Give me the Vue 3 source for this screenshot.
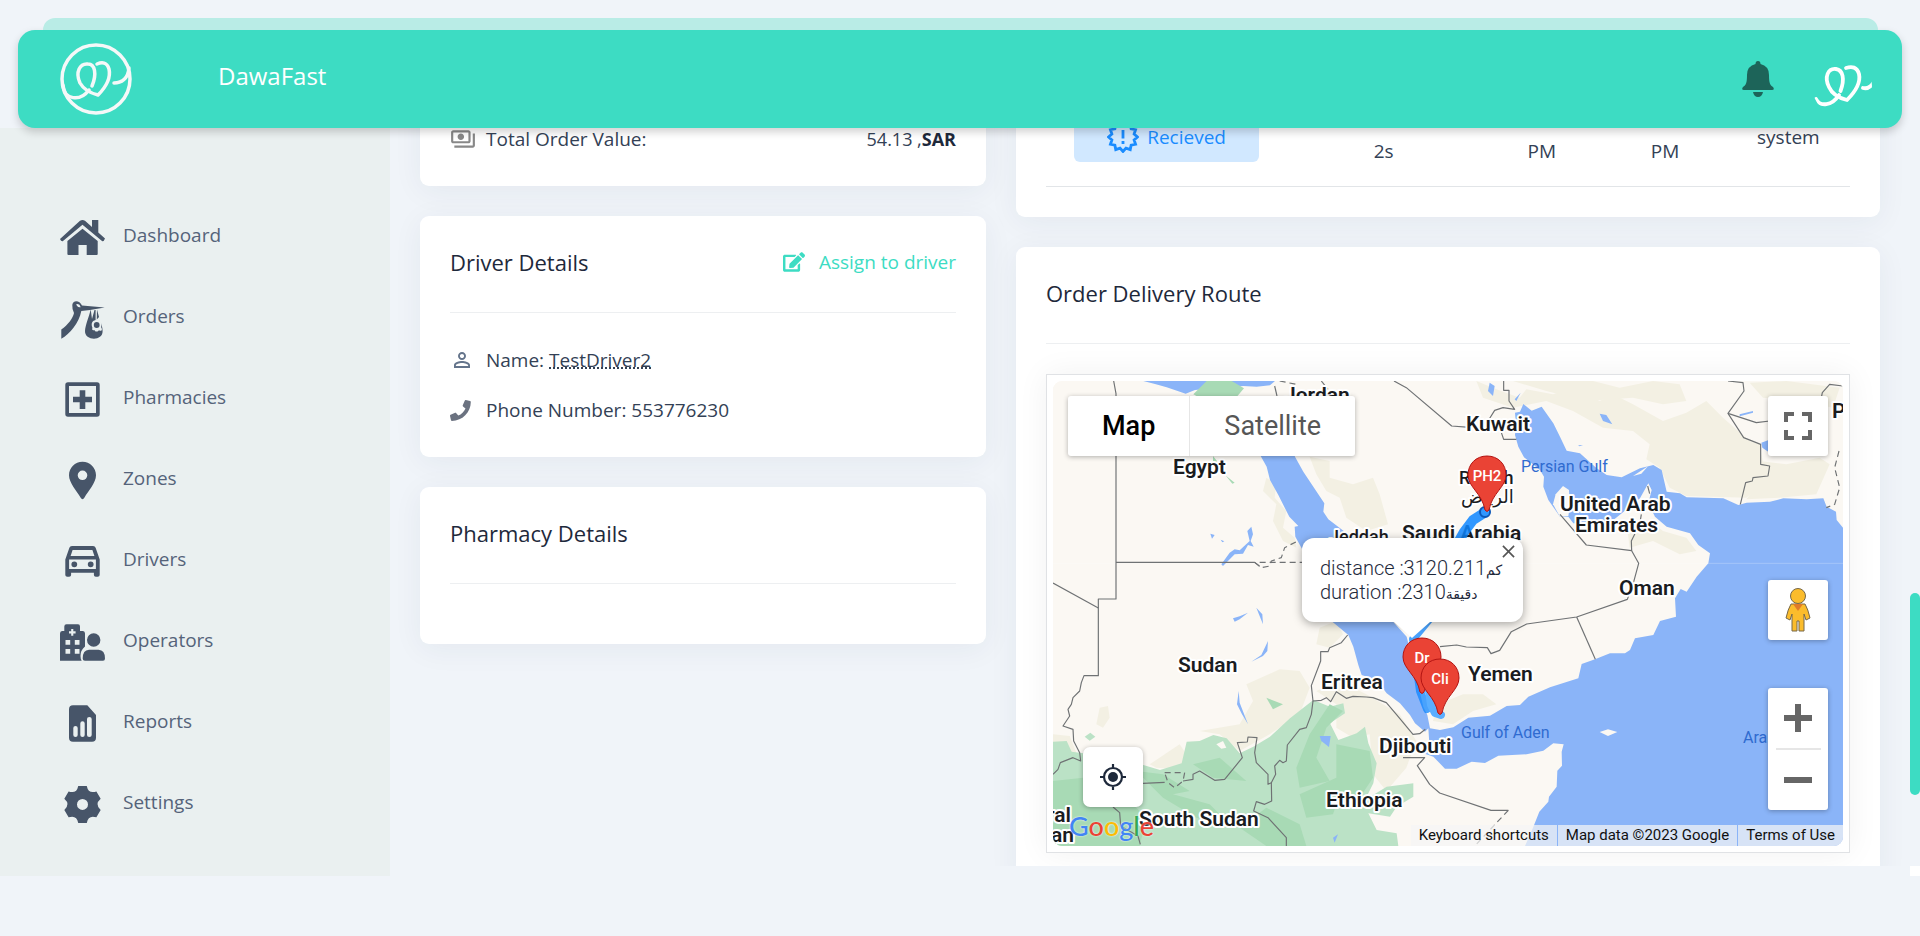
<script setup>
const polar = (cx, cy, r, deg) => {
  const a = (deg * Math.PI) / 180
  return `${(cx + r * Math.cos(a)).toFixed(2)} ${(cy + r * Math.sin(a)).toFixed(2)}`
}

const gear = [0, 1, 2, 3, 4, 5]
  .map((i) => {
    const a = -90 + i * 60
    return `${i ? 'L' : 'M'}${polar(22.5, 21.4, 19, a - 13)}L${polar(22.5, 21.4, 19, a + 13)}Q${polar(22.5, 21.4, 11.8, a + 30)} ${polar(22.5, 21.4, 19, a + 47)}`
  })
  .join('') + 'ZM17 21.4a5.5 5.5 0 1 0 11 0a5.5 5.5 0 1 0 -11 0Z'

const burst = Array.from({ length: 24 }, (_, i) => `${i ? 'L' : 'M'}${polar(16, 16, i % 2 ? 11.5 : 14.5, i * 15)}`).join('') + 'Z'

const menu = [
  { label: 'Dashboard', paths: ['M0 23 20 4.8Q22.5 3 25 4.8L32 11V4H38.3V16.6L45 22.6Q44 25.5 42.3 25.3L22.5 8.8 2.7 25.3Q1 25.6 0 23Z', 'M22.5 12.8 37.7 25V38Q37.7 39 36.7 39H26.7V29H18.5V39H8.5Q7.4 39 7.4 38V25Z'] },
  { label: 'Orders', paths: ['M12.3 8C12.5 3 19.500 2.500 22 8.500L44.700 10.500 30 13 21.300 14C19 26 10 37 1.300 41.800V32.500C8 28 13 21 14 16Q12 12 12.300 8ZM16 7.500Q18 11 20.700 10.200 19.500 6 16 7.500Z', 'M30.700 12.500C29 20 25.300 28 25 34 24.600 44 43 44.500 42.600 34 42.500 30 41.500 28 40.800 25 42 29 40.500 30 41.800 31.500 42.500 34 40 34.500 39 33 38 35 35 35 34.500 33 32.500 34 31.500 32 32.500 31 31 27 31.500 24 35.600 23V13H34.500L32 22ZM37 12.500 39 20 36.800 22.500Z', 'M33.800 28a2.900 2.900 0 1 0 5.800 0a2.900 2.900 0 1 0-5.800 0Z'] },
  { label: 'Pharmacies', paths: ['M8 4.300H37Q39.700 4.300 39.700 7V36Q39.700 38.700 37 38.700H8Q5.300 38.700 5.300 36V7Q5.300 4.300 8 4.300ZM9 8V35H36V8ZM19.700 12.200H25.300V18.700H32V24.300H25.300V31H19.700V24.300H13V18.700H19.700Z'] },
  { label: 'Zones', paths: ['M22.500 2.700C15 2.700 9 8.700 9 16.200 9 24 17 32 20.500 38.500Q22.500 42 24.500 38.500C28 32 36 24 36 16.200 36 8.700 30 2.700 22.500 2.700ZM17.700 16.300a4.800 4.800 0 1 1 9.600 0a4.800 4.800 0 1 1-9.600 0Z'] },
  { label: 'Drivers', paths: ['M35.700 8C35.300 6.800 34.300 6 33 6H12C10.700 6 9.700 6.800 9.300 8L5.300 19.500V34.700C5.300 35.800 6.200 36.700 7.300 36.700H9.200C10.300 36.700 11.100 35.800 11.100 34.700V32.800H33.900V34.700C33.900 35.800 34.700 36.700 35.800 36.700H37.700C38.800 36.700 39.700 35.800 39.700 34.700V19.500ZM12.600 9.900H32.400L34.400 15.900H10.600ZM35.900 29H9.100V19.500H35.900Z', 'M11.400 24.300a2.900 2.900 0 1 0 5.800 0a2.900 2.900 0 1 0-5.800 0ZM27.800 24.300a2.900 2.900 0 1 0 5.800 0a2.900 2.900 0 1 0-5.800 0Z'] },
  { label: 'Operators', paths: ['M4.300 10V5.500Q4.300 3.300 6.500 3.300H18Q20 3.300 20 5.500V10H23Q25 10 25 12.500V25.500Q20.500 29 20.500 35 20.500 38 21.700 39.700H0V12.500Q0 10 2 10ZM11.200 8V10.300H9V12.400H11.200V14.800H13.300V12.400H15.600V10.300H13.300V8ZM5.500 19V23.700H10.200V19ZM14.800 19V23.700H19.500V19ZM5.500 28V32.700H10.200V28ZM14.800 28V32.700H19.500V28Z', 'M27 19a6.700 6.700 0 1 0 13.400 0a6.700 6.700 0 1 0-13.400 0ZM29 28.700H38.500Q45 29 45 37.500 45 39.700 43 39.700H25Q22.700 39.700 22.700 37.500 22.700 29 29 28.700Z'] },
  { label: 'Reports', paths: ['M13 3.300H27.300L36 13V35.700Q36 39.700 32 39.700H13Q9 39.700 9 35.700V7.300Q9 3.300 13 3.300ZM13.300 26V33Q13.300 35 15.500 35 17.700 35 17.700 33V26Q17.700 24 15.500 24 13.300 24 13.300 26ZM20.300 21.500V33Q20.300 35 22.500 35 24.700 35 24.700 33V21.500Q24.700 19.300 22.500 19.300 20.300 19.300 20.300 21.500ZM27 17V33Q27 35 29.300 35 31.700 35 31.700 33V17Q31.700 15 29.300 15 27 15 27 17Z'] },
  { label: 'Settings', paths: [gear] },
]

const countries = [
  ['Jordan', 231, 21], ['Egypt', 120, 93], ['Kuwait', 413, 50], ['Saudi Arabia', 349, 159],
  ['United Arab', 507, 130], ['Emirates', 522, 151], ['Oman', 566, 214], ['Sudan', 125, 291],
  ['Eritrea', 268, 308], ['Yemen', 415, 300], ['Djibouti', 326, 372], ['Ethiopia', 273, 426],
  ['South Sudan', 86, 445], ['ral', -6, 441], ['an', -2, 461], ['P', 779, 37],
]
const seas = [['Persian Gulf', 468, 91], ['Gulf of Aden', 408, 357], ['Arabian Sea', 690, 362]]

const beige = [
  '1270,0 1330,25 1400,50 1420,25 1500,40 1560,20 1640,60 1680,40 1740,70 1830,120 1900,95 1960,60 2010,110 2090,180 2120,190 2140,300 2080,350 1900,345 1850,320 1820,260 1780,235 1790,190 1740,150 1650,140 1560,90 1480,60 1380,80 1290,50',
  '1380,0 1500,0 1620,0 1700,20 1800,0 1880,10 1900,60 1830,70 1740,50 1600,60 1480,30',
  '2090,5 2200,0 2360,20 2340,80 2240,60 2130,50',
  '2120,240 2200,250 2300,230 2330,250 2290,340 2180,350 2080,355 2130,290',
  '770,227 830,240 830,290 900,310 960,290 980,340 1005,430 940,450 880,410 860,350 820,330 790,280',
  '640,290 670,310 665,350 700,390 690,440 725,470 730,500 690,480 660,420 670,370 630,330',
  '580,910 680,865 740,870 770,920 740,1000 650,1060 560,1110 500,1060 440,1050 560,1030 600,960',
  '290,1150 380,1090 400,1120 380,1165 310,1160',
  '790,930 860,900 940,940 1040,1000 1090,1080 1060,1160 1000,1230 960,1180 950,1060 900,1070 850,1040 850,970',
  '0,1060 50,1065 70,1115 100,1140 60,1130 0,1090',
  '1720,420 1790,420 1830,450 1900,470 1930,510 1880,520 1800,480 1730,500',
  '1180,960 1230,940 1290,940 1330,970 1260,990 1200,1030 1140,1020 1150,980',
  '140,980 165,975 170,1010 150,1040 130,1030',
  '800,740 850,720 870,760 830,800 790,790',
]
const forest = [
  '830,970 870,990 820,1040 790,1130 830,1200 740,1220 730,1160 770,1060',
  '850,1090 950,1110 960,1190 920,1250 860,1240 840,1300 760,1310 740,1240 850,1190',
  '0,1200 90,1190 130,1260 210,1240 280,1310 260,1395 0,1395',
  '250,1170 330,1180 410,1230 360,1240 470,1270 530,1330 430,1310 330,1250',
  '640,1280 740,1330 760,1395 640,1395 560,1340',
  '420,1150 500,1130 580,1200 480,1190', '640,950 690,970 660,985',
]
const borders = [
  '182,0 189,38 189,654 136,654 136,884 93,884 85,905 80,930 60,950 55,970 45,985 50,1005 30,1035 60,1045 62,1080 80,1115 83,1140 60,1130 22,1145 15,1165 0,1180',
  '0,606 136,681', '189,544 605,544 620,556',
  '1023,0 1060,20 1196,135 1250,139', '1352,0 1352,28 1368,28 1368,60 1385,85 1350,80 1325,88 1305,120',
  '1340,140 1352,175 1390,175', '665,15 672,45', '805,0 825,25',
  '2025,0 2070,5 2073,30 2025,97 2110,125 2150,120', '2025,97 2072,170 2123,190 2123,250 2150,255 2145,285 2100,290 2098,300 2078,305 2062,370',
  '2305,50 2308,35 2330,10 2370,15', '1521,400 1600,492 1736,509 1757,547 1740,610 1723,655 1571,708 1421,729 1375,752 1340,808 1314,818 1303,800 1240,798 1211,792 1161,797',
  '1736,509 1735,480 1760,430 1765,400', '1571,708 1627,835', '1784,315 1790,338',
  '884,762 865,785 830,800 825,812 803,812 803,840 775,914 780,960 805,958 820,950 833,962 850,932 880,952 900,946 940,948 960,950 1000,965 1030,1000 1080,1060 1100,1058 1117,1045',
  '780,960 775,1000 760,1040 740,1045 703,1092 700,1140 690,1145 680,1138 665,1155 668,1180 655,1205 645,1210 645,1180 610,1145 605,1115 612,1070 585,1068 583,1083 553,1085 568,1130 515,1195 485,1198 440,1170 420,1180 420,1195 390,1200',
  '655,1205 656,1260 635,1270 610,1262 602,1290 645,1310 700,1370 700,1395',
  '180,1278 200,1295 203,1335 255,1365 262,1390', '270,1207 335,1204',
  '1050,1130 1115,1130 1093,1154 1130,1210 1160,1236 1314,1288 1366,1288',
]
const dashed = ['620,544 750,544', '605,544 625,560 650,555 655,540 685,530 695,500 730,482', '335,1175 395,1175 390,1200 365,1220 345,1205 335,1175', '1366,1288 1265,1395', '2358,210 2345,260 2360,320 2345,370 2320,380', '680,0 730,10']
const qatar = '1521,407 1500,370 1508,340 1530,315 1548,327 1550,380 1546,405'
const pins = [['PH2', 434, 94], ['Dr', 369, 276], ['Cli', 387, 297]]
</script>

<template>
  <div class="app">
    <header class="topbar">
      <svg class="logo" viewBox="0 0 72 72" aria-label="DawaFast logo">
        <g fill="none" stroke="#f5f8f8" stroke-width="3.500" stroke-linecap="round" stroke-linejoin="round">
          <circle cx="36" cy="36" r="34" />
          <path d="M32 43C37 31 35 21 28 21 20 20 15 29 20 40 24 47 30 50 38 52 46 44 51 35 49 26 47 19 42 19 37 21" />
          <path d="M3 42C4 57 20 59 29 47M69 25C68 36 61 40 54 40" />
        </g>
      </svg>
      <h1>DawaFast</h1>
      <button class="bell" aria-label="Notifications">
        <svg viewBox="0 0 32 36"><path fill="#1d6459" d="M16 0Q18.500 0 18.500 3 27 5 27 14C27 22 28 24 31 26Q33 29 30 29H2Q-1 29 1 26C4 24 5 22 5 14Q5 5 13.500 3 13.500 0 16 0ZM11 31H21Q20 36 16 36 12 36 11 31Z" /></svg>
      </button>
      <button class="avatar" aria-label="Account">
        <svg viewBox="0 0 60 60">
          <g fill="none" stroke="#fff" stroke-width="3.800" stroke-linecap="round" stroke-linejoin="round">
            <path d="M28.500 35C33 23 31 14 24 13 16 12 12 21 17 31 20 38 27 42 35 44 43 36 49 27 47 18 45 11 40 10 34 12" />
            <path d="M4 43C8 51 20 50 27 39M51 32C55 33 59 31 62 26" />
          </g>
        </svg>
      </button>
    </header>

    <div class="body">
      <nav class="sidebar">
        <a v-for="m in menu" :key="m.label" href="#">
          <svg viewBox="0 0 45 45"><path v-for="p in m.paths" :key="p" :d="p" fill-rule="evenodd" /></svg>
          <span>{{ m.label }}</span>
        </a>
      </nav>

      <main>
        <div class="col">
          <section class="card total">
            <div class="row">
              <svg class="ic grey" viewBox="0 0 24 24"><path d="M19 14V6c0-1.100-.9-2-2-2H3c-1.100 0-2 .9-2 2v8c0 1.100.9 2 2 2h14c1.100 0 2-.9 2-2zm-2 0H3V6h14v8zm-7-7c-1.660 0-3 1.340-3 3s1.340 3 3 3 3-1.340 3-3-1.340-3-3-3zm13 0v11c0 1.100-.9 2-2 2H4v-2h17V7h2z" /></svg>
              <span>Total Order Value:</span>
              <span class="amount">54.13 ,<b>SAR</b></span>
            </div>
          </section>

          <section class="card">
            <div class="head">
              <h2>Driver Details</h2>
              <a href="#" class="assign">
                <svg viewBox="0 0 576 512"><path d="M402.600 83.200l90.200 90.200c3.800 3.800 3.800 10 0 13.800L274.400 405.600l-92.800 10.300c-12.400 1.400-22.900-9.100-21.500-21.500l10.300-92.800L388.800 83.200c3.800-3.800 10-3.800 13.800 0zm162-22.900l-48.800-48.800c-15.200-15.200-39.900-15.200-55.200 0l-35.400 35.400c-3.800 3.800-3.800 10 0 13.800l90.200 90.200c3.800 3.800 10 3.800 13.800 0l35.400-35.400c15.200-15.300 15.200-40 0-55.200zM384 346.200V448H64V128h229.800c3.200 0 6.200-1.300 8.500-3.500l40-40c7.600-7.600 2.200-20.500-8.500-20.500H48C21.500 64 0 85.500 0 112v352c0 26.500 21.500 48 48 48h352c26.500 0 48-21.500 48-48V306.200c0-10.700-12.900-16-20.500-8.500l-40 40c-2.200 2.300-3.500 5.300-3.500 8.500z" /></svg>
                Assign to driver
              </a>
            </div>
            <div class="rows">
              <div class="row">
                <svg class="ic blue" viewBox="0 -1 26 26"><path d="M12 5.900c1.160 0 2.100.94 2.100 2.100s-.94 2.100-2.100 2.100S9.900 9.160 9.900 8s.94-2.100 2.100-2.100m0 9c2.970 0 6.100 1.460 6.100 2.100v1.100H5.900V17c0-.64 3.130-2.100 6.100-2.100M12 4C9.790 4 8 5.790 8 8s1.790 4 4 4 4-1.790 4-4-1.790-4-4-4zm0 9c-2.670 0-8 1.340-8 4v3h16v-3c0-2.660-5.330-4-8-4z" /></svg>
                <span>Name: <abbr title="TestDriver2">TestDriver2</abbr></span>
              </div>
              <div class="row">
                <svg class="ic phone" viewBox="0 0 640 512"><path d="M493.400 24.600l-104-24c-11.300-2.600-22.900 3.300-27.500 13.900l-48 112c-4.200 9.800-1.400 21.300 6.900 28l60.600 49.600c-36 76.700-98.900 140.500-177.200 177.200l-49.600-60.600c-6.800-8.300-18.200-11.100-28-6.900l-112 48C3.900 366.500-2 378.100.6 389.400l24 104C27.100 504.200 36.700 512 48 512c256.100 0 464-207.500 464-464 0-11.200-7.700-20.900-18.600-23.400z" /></svg>
                <span>Phone Number: 553776230</span>
              </div>
            </div>
          </section>

          <section class="card">
            <div class="head"><h2>Pharmacy Details</h2></div>
            <div class="rows"></div>
          </section>
        </div>

        <div class="col wide">
          <section class="card status">
            <table>
              <tbody>
                <tr>
                  <td class="state">
                    <span class="pill">
                      <svg viewBox="0 0 32 32"><path :d="burst" fill="none" stroke="#1a8cff" stroke-width="2.800" /><path d="M14.600 9H17.400V17.500H14.600ZM14.600 20H17.400V23H14.600Z" fill="#1a8cff" /></svg>
                      Recieved
                    </span>
                  </td>
                  <td class="lower time">2s</td>
                  <td class="lower">PM</td>
                  <td class="lower">PM</td>
                  <td>system</td>
                </tr>
              </tbody>
            </table>
          </section>

          <section class="card">
            <div class="head"><h2>Order Delivery Route</h2></div>
            <div class="rows">
              <div class="frame">
                <div class="map">
                  <svg class="canvas" viewBox="0 0 790 465" preserveAspectRatio="xMidYMid slice">
                    <g transform="scale(.33333)">
                      <rect width="2370" height="1395" fill="#fbf8f3" />
                      <polygon v-for="p in beige" :key="p" :points="p" fill="#f3f0e3" />
                      <polygon fill="#bbe2c6" points="0,1082 41,1080 56,1112 91,1117 110,1150 271,1152 321,1167 386,1147 401,1082 440,1080 481,1062 521,1072 560,1117 601,1097 651,1067 711,1012 781,957 831,977 871,967 876,997 831,1027 856,1077 911,1057 936,1037 946,1087 971,1147 961,1207 936,1257 1001,1217 1081,1207 1081,1247 1031,1277 1011,1307 946,1297 971,1347 1031,1357 1036,1395 0,1395" />
                      <polygon points="490,1090 510,1080 520,1100 505,1103" fill="#fbf8f3" />
                      <polygon v-for="p in forest" :key="p" :points="p" fill="#a8dab5" />
                      <polygon points="95,1067 112,1055 127,1067 110,1079" fill="#bbe2c6" />
                      <g fill="#8ab4f8">
                        <polygon points="271,0 306,9 341,19 398,38 426,27 571,15 611,17 651,13 666,0" />
                        <path d="M560 60 623 225 641 257 651 297 676 342 696 382 709 407 736 435 725 437 727 467 746 502 839 723 886 762 901 797 916 852 926 882 971 897 1001 937 1041 967 1071 1002 1086 1027 1116 1052 1126 1042 1129 1087 1111 1117 1141 1127 1176 1163 1211 1163 1256 1142 1296 1146 1336 1124 1421 1120 1471 1109 1501 1087 1532 1090 1526 1112 1527 1154 1513 1169 1511 1217 1488 1247 1486 1262 1459 1292 1440 1340 1416 1395H2370V440L2351 417 2349 392 2321 377 2311 352 2261 355 2191 352 2151 362 2081 365 2056 372 2011 352 1901 349 1881 337 1841 332 1826 267 1801 252 1761 262 1706 289 1661 282 1631 262 1581 217 1541 209 1521 167 1501 127 1466 77 1436 89 1411 69 1401 92 1386 95 1389 132 1386 162 1396 197 1413 229 1461 267 1473 287 1471 317 1486 357 1521 407 1546 407 1561 427 1631 432 1681 417 1731 377 1761 352 1786 307 1796 327 1786 367 1806 407 1841 437 1911 457 1936 492 1971 517 1966 547 1931 587 1901 632 1883 624 1866 652 1869 707 1821 720 1801 762 1746 772 1731 807 1716 817 1671 817 1626 835 1586 849 1576 892 1491 919 1426 947 1401 972 1361 975 1311 1004 1246 1010 1201 1039 1161 1047 1131 1042 1123 1002 1111 977 1071 807 1061 767 1021 723 881 457 826 415 811 392 814 367 781 317 751 272 726 227 700 140Z" />
                        <path d="M505 550 530 515 545 505 560 508 590 480 583 450 595 437 600 460 593 480 602 497 585 492 570 518 545 520 510 555ZM472 458 485 462 477 473ZM503 476 514 481 508 484ZM540 712 560 706 585 695 560 715 545 722ZM610 680 628 700 630 730 622 710ZM645 780 643 810 630 825 595 842 625 822ZM557 930 560 965 585 1030 567 1000 552 970ZM800 1065 833 1065 828 1098 805 1080ZM840 1370 855 1360 845 1385Z" />
                        <path d="M1640 98 1660 102 1678 130 1650 120ZM1575 193 1590 192 1580 196ZM1310 5 1325 15 1320 45 1305 30ZM1385 55 1403 35 1390 60ZM2060 100 2100 90 2100 95 2060 106ZM2125 185 2145 178 2150 215 2128 200Z" />
                      </g>
                      <g fill="#fbf8f3">
                        <polygon :points="qatar" />
                        <path d="M1640 1053 1665 1045 1693 1053 1665 1065ZM1740 285 1785 256 1765 278Z" />
                      </g>
                      <path d="M421 40 436 48 551 48 573 22 536 0H461ZM480 225 492 240 495 265 545 305 538 308 515 280 480 240Z" fill="#a8dab5" />
                      <path d="M0 547H189M750 547H2370" stroke="#fff" stroke-opacity=".35" stroke-width="2" />
                      <g fill="none" stroke="#6f7274" stroke-width="3.500" stroke-linejoin="round">
                        <polyline v-for="p in borders" :key="p" :points="p" />
                        <polyline v-for="p in dashed" :key="p" :points="p" stroke-dasharray="18 12" />
                      </g>
                    </g>
                    <g class="country"><text v-for="c in countries" :key="c[0]" :x="c[1]" :y="c[2]">{{ c[0] }}</text></g>
                    <g class="city">
                      <text x="276" y="162">Jeddah</text><text x="406" y="103">Riyadh</text><text x="408" y="122">الرياض</text>
                    </g>
                    <g class="sea"><text v-for="s in seas" :key="s[0]" :x="s[1]" :y="s[2]">{{ s[0] }}</text></g>
                    <g fill="none" stroke="#0d86ff" stroke-linecap="round" stroke-linejoin="round">
                      <path d="M431 132 420 139 411 151 395 180" stroke-opacity=".85" stroke-width="10" />
                      <path d="M379 235 360 258 367 310 374 328" stroke-opacity=".75" stroke-width="8" />
                      <path d="M376 310 378 324 382 332 388 334" stroke="#5aaeff" stroke-width="8" />
                      <circle cx="432" cy="131" r="5" stroke="#0b57b8" stroke-width="2" />
                    </g>
                    <g v-for="p in pins" :key="p[0]">
                      <path :transform="`translate(${p[1]} ${p[2]})`" d="M0-19C-11-19-19-11-19 0-19 12-5 18-2 35Q0 38 2 35C5 18 19 12 19 0 19-11 11-19 0-19Z" fill="#ea4335" stroke="#b31412" />
                      <text class="pin" :x="p[1]" :y="p[2] + 6">{{ p[0] }}</text>
                    </g>
                  </svg>

                  <div class="types">
                    <button class="on">Map</button><button>Satellite</button>
                  </div>
                  <button class="ctl full" aria-label="Fullscreen"><svg viewBox="0 0 28 28"><path d="M2 10V2H10M18 2H26V10M26 18V26H18M10 26H2V18" fill="none" stroke="#666" stroke-width="4" /></svg></button>
                  <button class="ctl peg" aria-label="Street View">
                    <svg viewBox="0 0 28 46"><g fill="#fbbc2c" stroke="#76684a" stroke-width="1"><path d="M7 17H21Q24 22 26 31L22 33 20 27V44H15V34H13V44H8V27L6 33 2 31Q4 22 7 17Z" /><circle cx="14" cy="9" r="7.500" /></g><path d="M9 17H19L14 24Z" fill="#e07b29" /></svg>
                  </button>
                  <div class="zoom">
                    <button aria-label="Zoom in"><svg viewBox="0 0 28 28"><path d="M0 14H28M14 0V28" stroke="#666" stroke-width="6" /></svg></button>
                    <button aria-label="Zoom out"><svg viewBox="0 0 28 28"><path d="M0 14H28" stroke="#666" stroke-width="6" /></svg></button>
                  </div>
                  <button class="ctl locate" aria-label="My location"><svg viewBox="0 0 26 26"><circle cx="13" cy="13" r="5" fill="#1e293b" /><path d="M13 0V5M13 21V26M0 13H5M21 13H26M4 13a9 9 0 1 0 18 0a9 9 0 1 0-18 0Z" fill="none" stroke="#1e293b" stroke-width="2.200" /></svg></button>

                  <div class="popup">
                    <p>distance :3120.211<span>كم</span></p>
                    <p>duration :2310<span>دقيقة</span></p>
                    <button aria-label="Close"><svg viewBox="0 0 14 14"><path d="M1 1 13 13M13 1 1 13" stroke="#555" stroke-width="1.800" /></svg></button>
                  </div>
                  <div class="google" aria-label="Google"><i class="b">G</i><i class="r">o</i><i class="y">o</i><i class="b">g</i><i class="g">l</i><i class="r">e</i></div>
                  <div class="legal"><button>Keyboard shortcuts</button><span>Map data ©2023 Google</span><a href="#">Terms of Use</a></div>
                </div>
              </div>
            </div>
          </section>
        </div>
      </main>
    </div>
    <div class="track"><div class="thumb"></div></div>
  </div>
</template>

<style>
body { margin: 0; background: #f0f4f9; }
</style>

<style scoped>
.app { position: relative; min-height: 100vh; overflow: hidden; box-sizing: border-box; padding-top: 30px; background: #f0f4f9; color: #334155; font: 400 19px/28px "Open Sans", "Noto Sans", sans-serif; }
.app *, .app *::before, .app *::after { box-sizing: border-box; }
h1, h2, p { margin: 0; font-weight: 400; }
button { border: 0; padding: 0; background: none; font: inherit; color: inherit; cursor: pointer; }
a { color: inherit; text-decoration: none; }
svg { display: block; }

.topbar { position: relative; z-index: 2; display: flex; align-items: center; height: 98px; margin: 0 18px; padding: 0 30px 0 42px; border-radius: 17px; background: #3ddcc3; box-shadow: 0 4px 8px rgba(0, 0, 0, .18); }
.topbar::before { content: ""; position: absolute; z-index: -1; top: -12px; left: 25px; right: 24px; height: 12px; border-radius: 17px 17px 0 0; background: #b9ece6; }
.logo { width: 72px; height: 72px; }
.topbar h1 { margin-left: 86px; padding-bottom: 6px; color: #fff; font-size: 24px; font-weight: 500; }
.bell { width: 32px; margin-left: auto; }
.avatar { width: 60px; height: 60px; margin: 13px 0 0 38px; border-radius: 50%; overflow: hidden; }

.body { display: grid; grid-template-columns: 390px minmax(0, 1fr); align-items: start; }
.sidebar { height: calc(100vh - 188px); padding: 70px 60px 0; background: #eaf0f0; }
.sidebar a { display: flex; align-items: center; gap: 18px; height: 81px; color: #55637a; }
.sidebar svg { width: 45px; height: 45px; fill: #475569; }
.sidebar span { padding-bottom: 8px; }

main { display: flex; height: calc(100vh - 158px); margin-top: -40px; padding: 0 25px 0 15px; overflow: hidden; }
.col { flex: 0 0 40%; min-width: 0; padding: 0 15px; }
.wide { flex-basis: 60%; }
.card { margin-bottom: 30px; padding: 30px; border-radius: 9px; background: #fff; box-shadow: 0 5px 30px rgba(30, 50, 80, .06); }
.total { padding-top: 34px; border-radius: 0 0 9px 9px; }
.row { display: flex; align-items: center; gap: 10px; height: 34px; }
.ic { width: 26px; height: 26px; }
.grey { fill: #888; }
.blue { fill: #64748b; }
.phone { height: 21px; fill: #6b7280; }
.amount { margin-left: auto; font-size: 18px; }
.amount b { color: #1e293b; font-weight: 700; }
abbr { text-decoration: underline dotted; }
.head { display: flex; justify-content: space-between; align-items: flex-start; height: 67px; border-bottom: 1px solid #edeff1; line-height: 32px; }
.head h2 { color: #1e293b; font-size: 22px; }
.assign { display: flex; align-items: center; gap: 14px; color: #3ddcc3; }
.assign svg { width: 22px; height: 20px; fill: currentColor; }
.rows { display: grid; gap: 16px; padding-top: 30px; }

.status { padding-top: 0; }
table { width: 100%; table-layout: fixed; border-collapse: collapse; }
td { height: 98px; padding: 0; border-bottom: 1px solid #e2e5e8; text-align: center; }
.state { width: 30%; padding: 0 28px; }
.time { width: 24%; }
.lower { padding-top: 28px; }
.pill { display: flex; align-items: center; justify-content: center; gap: 8px; height: 50px; border-radius: 6px; background: #d1e8ff; color: #1a8cff; }
.pill svg { width: 32px; height: 32px; }

.frame { padding: 6px; border: 1px solid #e0e2e5; background: #fff; box-shadow: 0 0 30px rgba(0, 0, 0, .06); }
.map { position: relative; height: 465px; overflow: hidden; border-radius: 9px; background: #fbf8f3; font-family: Roboto, "DejaVu Sans", sans-serif; }
.canvas { width: 100%; height: 100%; }
.country text, .city text { fill: #1a1c1f; stroke: #fff; stroke-width: 4px; stroke-linejoin: round; paint-order: stroke; font-size: 21px; font-weight: 600; }
.city text { font-size: 18px; font-weight: 500; }
.sea text { fill: #2f6bd0; font-size: 16px; font-weight: 400; }
.pin { fill: #fff; font-size: 15px; font-weight: 500; text-anchor: middle; }
.types { position: absolute; top: 15px; left: 15px; display: flex; height: 60px; border-radius: 3px; background: #fff; box-shadow: 0 1px 5px rgba(0, 0, 0, .3); color: #565656; font-size: 27px; font-weight: 400; }
.types button { padding: 0 34px; }
.types .on { border-right: 1px solid #e6e6e6; color: #000; font-weight: 500; }
.ctl, .zoom { position: absolute; right: 15px; display: flex; align-items: center; justify-content: center; width: 60px; height: 60px; border-radius: 3px; background: #fff; box-shadow: 0 1px 5px rgba(0, 0, 0, .3); }
.full { top: 15px; }
.ctl svg, .zoom svg { width: 28px; }
.peg { bottom: 206px; }
.locate { right: auto; left: 30px; bottom: 39px; border-radius: 7px; }
.locate svg { width: 26px; }
.zoom { bottom: 36px; flex-direction: column; height: 122px; }
.zoom button { display: flex; align-items: center; justify-content: center; width: 45px; flex: 1; }
.zoom button + button { border-top: 2px solid #e6e6e6; }
.popup { position: absolute; top: 157px; left: 249px; width: 221px; padding: 18px; border-radius: 12px; background: #fff; box-shadow: 0 2px 10px rgba(0, 0, 0, .35); font-size: 20px; line-height: 24px; white-space: nowrap; color: #1e293b; }
.popup p { height: 24px; font-weight: 300; }
.popup span { font-size: 14px; font-weight: 400; }
.popup::after { content: ""; position: absolute; top: 100%; left: 92px; border: 18px solid transparent; border-top: 16px solid #fff; border-bottom: 0; }
.popup button { position: absolute; top: 7px; right: 8px; }
.popup svg { width: 13px; }
.google { position: absolute; left: 16px; bottom: 4px; font: 500 27px/32px Lato, sans-serif; text-shadow: 0 0 2px #fff; }
.google i { font-style: normal; }
.b { color: #4285f4; } .r { color: #ea4335; } .y { color: #fbbc05; } .g { color: #34a853; }
.legal { position: absolute; right: 0; bottom: 0; display: flex; gap: 1px; font-size: 15px; font-weight: 400; line-height: 21px; color: #111; }
.legal > * { padding: 0 8px; background: rgba(245, 245, 245, .72); line-height: 21px; }

.track { position: absolute; top: 128px; right: 0; width: 10px; height: calc(100vh - 188px); background: linear-gradient(#fff, #fff) bottom / 10px 10px no-repeat; }
.thumb { width: 10px; height: 27%; margin-top: 465px; border-radius: 5px; background: #3ddcc3; }
</style>
